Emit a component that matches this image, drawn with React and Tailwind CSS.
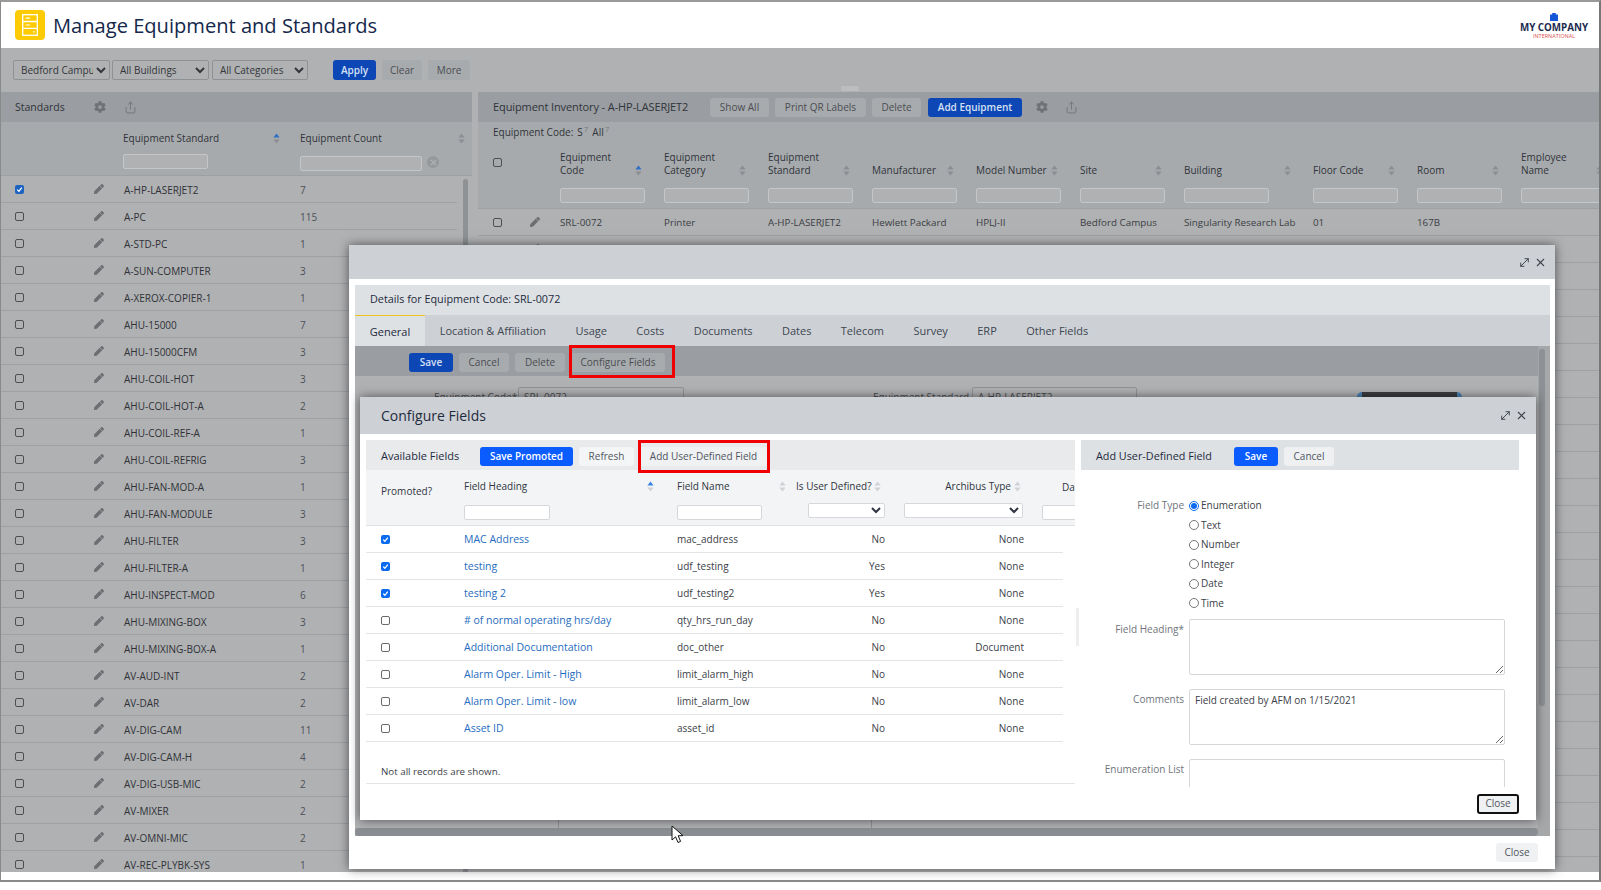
import React from 'react';
import { FaCog, FaPen } from 'react-icons/fa';
import { X, MoveDiagonal, Share } from 'lucide-react';

const standards = [['A-HP-LASERJET2','7'],['A-PC','115'],['A-STD-PC','1'],['A-SUN-COMPUTER','3'],['A-XEROX-COPIER-1','1'],['AHU-15000','7'],['AHU-15000CFM','3'],['AHU-COIL-HOT','3'],['AHU-COIL-HOT-A','2'],['AHU-COIL-REF-A','1'],['AHU-COIL-REFRIG','3'],['AHU-FAN-MOD-A','1'],['AHU-FAN-MODULE','3'],['AHU-FILTER','3'],['AHU-FILTER-A','1'],['AHU-INSPECT-MOD','6'],['AHU-MIXING-BOX','3'],['AHU-MIXING-BOX-A','1'],['AV-AUD-INT','2'],['AV-DAR','2'],['AV-DIG-CAM','11'],['AV-DIG-CAM-H','4'],['AV-DIG-USB-MIC','2'],['AV-MIXER','2'],['AV-OMNI-MIC','2'],['AV-REC-PLYBK-SYS','1']];

const invCols = [
  { l1: 'Equipment', l2: 'Code', w: 'w-[104px]', v: 'SRL-0072', active: true },
  { l1: 'Equipment', l2: 'Category', w: 'w-[104px]', v: 'Printer' },
  { l1: 'Equipment', l2: 'Standard', w: 'w-[104px]', v: 'A-HP-LASERJET2' },
  { l2: 'Manufacturer', w: 'w-[104px]', v: 'Hewlett Packard' },
  { l2: 'Model Number', w: 'w-[104px]', v: 'HPLJ-II' },
  { l2: 'Site', w: 'w-[104px]', v: 'Bedford Campus' },
  { l2: 'Building', w: 'w-[129px]', v: 'Singularity Research Lab' },
  { l2: 'Floor Code', w: 'w-[104px]', v: '01' },
  { l2: 'Room', w: 'w-[104px]', v: '167B' },
  { l1: 'Employee', l2: 'Name', w: 'w-[104px]', v: '' },
];

const fields = [
  ['MAC Address','mac_address','No','None',true],
  ['testing','udf_testing','Yes','None',true],
  ['testing 2','udf_testing2','Yes','None',true],
  ['# of normal operating hrs/day','qty_hrs_run_day','No','None',false],
  ['Additional Documentation','doc_other','No','Document',false],
  ['Alarm Oper. Limit - High','limit_alarm_high','No','None',false],
  ['Alarm Oper. Limit - low','limit_alarm_low','No','None',false],
  ['Asset ID','asset_id','No','None',false],
];

const tabs = ['General','Location & Affiliation','Usage','Costs','Documents','Dates','Telecom','Survey','ERP','Other Fields'];
const radios = ['Enumeration','Text','Number','Integer','Date','Time'];

function Sort({ active, light }) {
  const off = light ? '#cfd2d6' : '#8b8e92';
  return (
    <svg width="7" height="11" viewBox="0 0 7 11" className="shrink-0">
      <path d="M3.5 0.5 L6.6 4.6 H0.4 Z" fill={active ? (light ? '#3b82e6' : '#2f6fc4') : off} />
      <path d="M3.5 10.5 L6.6 6.4 H0.4 Z" fill={off} />
    </svg>
  );
}

function Check({ on, bright }) {
  if (on) {
    return (
      <span className={`flex h-[9px] w-[9px] shrink-0 items-center justify-center rounded-[2px] ${bright ? 'bg-[#0b6bf0]' : 'bg-[#1d63c0]'}`}>
        <svg width="7" height="7" viewBox="0 0 7 7"><path d="M1.2 3.6 L2.9 5.3 L5.8 1.6" stroke="#fff" strokeWidth="1.3" fill="none" /></svg>
      </span>
    );
  }
  return <span className={`block h-[9px] w-[9px] shrink-0 rounded-[2px] border ${bright ? 'border-[#6b6b6b] bg-white' : 'border-[#4d4f52]'}`} />;
}

function DimBtn({ children, className = '' }) {
  return <span className={`flex h-[19px] items-center justify-center rounded-[3px] bg-[#a8abae] text-[10px] text-[#4a4d52] ${className}`}>{children}</span>;
}
function DimPrimary({ children, className = '' }) {
  return <span className={`flex h-[19px] items-center justify-center rounded-[3px] bg-[#0d47b5] text-[10px] font-semibold text-[#d6e0f5] ${className}`}>{children}</span>;
}
function Btn({ children, className = '' }) {
  return <span className={`flex h-[19px] items-center justify-center rounded-[3px] bg-[#eef0f2] text-[10px] text-[#4f5560] ${className}`}>{children}</span>;
}
function Primary({ children, className = '' }) {
  return <span className={`flex h-[19px] items-center justify-center rounded-[3px] bg-[#0b5cff] text-[10px] font-semibold text-white ${className}`}>{children}</span>;
}
const dimInput = 'block h-[15px] rounded-[2px] border border-[#c4c6c8] bg-[#b0b1b3] outline-none';
const dimSelect = 'h-[20px] rounded-[2px] border border-[#8f9194] bg-[#b0b1b3] pl-[3px] text-[10px] text-[#33363a] outline-none';

function Pencil() {
  return <FaPen className="h-[10px] w-[10px] shrink-0 text-[#6c6e71]" />;
}

function StandardsPanel() {
  return (
    <section className="flex h-full w-[471px] shrink-0 flex-col overflow-hidden">
      <div className="flex h-[30px] shrink-0 items-center bg-[#9a9da1] pl-[14px]">
        <span className="w-[79px] pt-[2px] text-[10.5px] text-[#30343a]">Standards</span>
        <FaCog className="h-[12px] w-[12px] text-[#6f7276]" />
        <Share className="ml-[18px] h-[13px] w-[13px] text-[#6f7276]" strokeWidth={1.6} />
      </div>
      <div className="h-[54px] shrink-0 border-b border-[#9ea1a4] bg-[#a7aaad]">
        <div className="flex h-[32px] items-center text-[10px] text-[#30343a]">
          <span className="ml-[122px] flex w-[157px] items-center justify-between"><span>Equipment Standard</span><Sort active /></span>
          <span className="ml-[20px] flex w-[165px] items-center justify-between"><span>Equipment Count</span><Sort /></span>
        </div>
        <div className="flex items-start">
          <input className={`${dimInput} ml-[122px] w-[85px]`} aria-label="Equipment Standard" />
          <input className={`${dimInput} ml-[92px] mt-[2px] w-[122px]`} aria-label="Equipment Count" />
          <span className="ml-[5px] mt-[2px] flex h-[12px] w-[12px] items-center justify-center rounded-full bg-[#96999c]"><X className="h-[9px] w-[9px] text-[#b0b1b3]" strokeWidth={3} /></span>
        </div>
      </div>
      <div className="flex min-h-0 flex-1 bg-[#b0b1b3]">
        <div className="w-[456px] shrink-0">
          {standards.map(([n, c], i) => (
            <div key={n} className="flex h-[27px] items-center border-b border-[#9ea1a4] pl-[14px] text-[10px]">
              <Check on={i === 0} />
              <span className="ml-[70px]"><Pencil /></span>
              <span className="ml-[20px] w-[176px] pt-[3px] text-[#2f3237]">{n}</span>
              <span className="pt-[3px] text-[#4b5058]">{c}</span>
            </div>
          ))}
        </div>
        <div className="ml-[6px] mt-[3px] w-[5px] self-stretch rounded-t-full bg-[#8f9295]" />
      </div>
    </section>
  );
}

function InventoryPanel() {
  return (
    <section className="ml-[6px] flex h-full min-w-0 flex-1 flex-col overflow-hidden">
      <div className="flex h-[30px] shrink-0 items-center bg-[#9a9da1] pl-[15px]">
        <span className="w-[217px] whitespace-nowrap text-[11px] tracking-[-0.1px] text-[#30343a]">Equipment Inventory - A-HP-LASERJET2</span>
        <DimBtn className="w-[59px]">Show All</DimBtn>
        <DimBtn className="ml-[6px] w-[91px]">Print QR Labels</DimBtn>
        <DimBtn className="ml-[6px] w-[49px]">Delete</DimBtn>
        <DimPrimary className="ml-[7px] w-[94px]">Add Equipment</DimPrimary>
        <FaCog className="ml-[14px] h-[12px] w-[12px] text-[#6f7276]" />
        <Share className="ml-[17px] h-[13px] w-[13px] text-[#6f7276]" strokeWidth={1.6} />
      </div>
      <div className="h-[87px] shrink-0 border-b border-[#9ea1a4] bg-[#a7aaad]">
        <div className="flex h-[21px] items-center pl-[15px] text-[10px] text-[#30343a]">
          <span>Equipment Code:</span>
          <span className="ml-[4px]">S</span><sup className="ml-[1px] text-[8px] text-[#777a7e]">7</sup>
          <span className="ml-[4px]">All</span><sup className="ml-[1px] text-[8px] text-[#777a7e]">7</sup>
        </div>
        <div className="flex h-[34px] w-[1300px] items-end">
          <span className="flex w-[82px] shrink-0 self-start pl-[15px] pt-[15px]"><Check /></span>
          {invCols.map((c, i) => (
            <div key={i} className={`${c.w} shrink-0 pr-[22px] text-[10px] leading-[13px] text-[#30343a]`}>
              {c.l1 && <div>{c.l1}</div>}
              <div className="flex items-center justify-between"><span>{c.l2}</span><Sort active={c.active} /></div>
            </div>
          ))}
        </div>
        <div className="mt-[11px] flex w-[1300px]">
          <span className="w-[82px] shrink-0" />
          {invCols.map((c, i) => (
            <div key={i} className={`${c.w} shrink-0`}>
              <input className={`${dimInput} w-[85px]`} aria-label={c.l2} />
            </div>
          ))}
        </div>
      </div>
      <div className="min-h-0 flex-1 bg-[#b0b1b3]">
        {Array.from({ length: 25 }).map((_, r) => (
          <div key={r} className="flex h-[27px] w-[1300px] items-center border-b border-[#9ea1a4] text-[9.8px] text-[#3b3e43]">
            {r < 2 && <span className="flex w-[52px] shrink-0 items-center pl-[15px]"><Check /></span>}
            {r < 2 && <span className="w-[30px] shrink-0"><Pencil /></span>}
            {r === 0 && invCols.map((c, i) => <span key={i} className={`${c.w} shrink-0 pt-[3px]`}>{c.v}</span>)}
          </div>
        ))}
      </div>
    </section>
  );
}

function FirstModal() {
  return (
    <div className="absolute left-[349px] top-[245px] flex h-[624px] w-[1206px] flex-col bg-white shadow-[0_0_10px_rgba(0,0,0,0.55)]">
      <div className="flex h-[34px] shrink-0 items-center justify-end gap-[3px] bg-[#cdd1d5] pr-[8px] text-[#41464d]">
        <MoveDiagonal className="h-[13px] w-[13px]" strokeWidth={1.8} />
        <X className="h-[13px] w-[13px]" strokeWidth={2} />
      </div>
      <div className="ml-[6px] mr-[5px] mt-[6px] flex h-[30px] shrink-0 items-center bg-[#dde1e4] pb-[2px] pl-[15px] text-[10.8px] text-[#1f2a3d]">Details for Equipment Code: SRL-0072</div>
      <div className="ml-[6px] mr-[5px] flex h-[31px] shrink-0 items-stretch bg-[#cdd1d5] text-[11px] text-[#3e4651]">
        {tabs.map((t, i) => (
          <span key={t} className={`flex items-center pt-[2px] ${i === 0 ? 'w-[70px] justify-center border-t border-[#f0c419] bg-[#dde1e4] text-[#1f2a3d]' : 'px-[14.7px]'}`}>{t}</span>
        ))}
      </div>
      <div className="ml-[6px] mr-[5px] flex min-h-0 flex-1 bg-[#a5a7a9]">
        <div className="flex min-w-0 flex-1 flex-col">
          <div className="flex h-[30px] shrink-0 items-center bg-[#9a9da1] pl-[54px] pt-[2px]">
            <DimPrimary className="w-[44px]">Save</DimPrimary>
            <DimBtn className="ml-[6px] w-[50px]">Cancel</DimBtn>
            <DimBtn className="ml-[6px] w-[50px]">Delete</DimBtn>
            <DimBtn className="ml-[6px] w-[94px]">Configure Fields</DimBtn>
          </div>
          <div className="flex min-h-0 flex-1 flex-col justify-between overflow-hidden bg-[#b0b1b3]">
            <div className="flex items-start pt-[11px] text-[10px] text-[#4a4d52]">
              <span className="ml-[79px] w-[78px] whitespace-nowrap pt-[3px]">Equipment Code*</span>
              <span className="ml-[6px] h-[20px] w-[166px] rounded-[2px] border border-[#909295] pl-[5px] pt-[2px]">SRL-0072</span>
              <span className="ml-[189px] w-[93px] whitespace-nowrap pt-[3px]">Equipment Standard</span>
              <span className="ml-[6px] h-[20px] w-[165px] rounded-[2px] border border-[#909295] pl-[5px] pt-[2px]">A-HP-LASERJET2</span>
              <span className="ml-[220px] mt-[5px] h-[20px] w-[105px] rounded-t-[5px] bg-[#4d84b5] px-[5px]"><span className="block h-full bg-[#3c3d40]" /></span>
            </div>
            <div className="flex h-[8px] shrink-0">
              <span className="ml-[203px] w-[314px] border-x border-[#8f9194]" />
            </div>
          </div>
          <div className="h-[8px] shrink-0 rounded-full bg-[#8a8d91]" />
        </div>
        <div className="w-[12px] shrink-0 pl-[1px] pt-[3px]">
          <div className="h-[357px] w-[6px] rounded-full bg-[#8d9094]" />
        </div>
      </div>
      <div className="flex h-[33px] shrink-0 items-center justify-end pr-[17px]">
        <Btn className="w-[42px] bg-[#f0f1f2]">Close</Btn>
      </div>
    </div>
  );
}

const fieldGrid = 'grid grid-cols-[98px_213px_119px_108px_138px_1fr]';

function SecondModal() {
  return (
    <div className="absolute left-[360px] top-[397px] flex h-[423px] w-[1176px] flex-col bg-white shadow-[0_0_10px_rgba(0,0,0,0.55)]">
      <div className="flex h-[37px] shrink-0 items-center bg-[#cdd1d5] pl-[21px] pr-[8px] text-[#41464d]">
        <span className="flex-1 text-[14px] text-[#1f2a3d]">Configure Fields</span>
        <MoveDiagonal className="mr-[3px] h-[13px] w-[13px]" strokeWidth={1.8} />
        <X className="h-[13px] w-[13px]" strokeWidth={2} />
      </div>
      <div className="ml-[6px] mt-[6px] flex h-[347px] shrink-0">
        <div className="flex w-[709px] shrink-0 flex-col overflow-hidden">
          <div className="flex h-[30px] shrink-0 items-center bg-[#e8eaec] pl-[15px] pt-[2px]">
            <span className="w-[99px] text-[11px] text-[#1f2a3d]">Available Fields</span>
            <Primary className="w-[93px]">Save Promoted</Primary>
            <Btn className="ml-[6px] w-[55px] bg-[#f4f5f6]">Refresh</Btn>
            <Btn className="ml-[6px] w-[127px] bg-[#f0f1f3]">Add User-Defined Field</Btn>
          </div>
          <div className={`${fieldGrid} h-[56px] shrink-0 items-start border-b border-[#dfe1e4] bg-[#f3f4f6] text-[10px] text-[#2f3540]`}>
            <span className="pl-[15px] pt-[14px]">Promoted?</span>
            <div className="pt-[10px]">
              <div className="flex h-[13px] w-[190px] items-center justify-between"><span>Field Heading</span><Sort active light /></div>
              <input className="mt-[12px] block h-[15px] w-[86px] rounded-[2px] border border-[#d5d7da] bg-white outline-none" aria-label="Field Heading" />
            </div>
            <div className="pt-[10px]">
              <div className="flex h-[13px] w-[109px] items-center justify-between"><span>Field Name</span><Sort light /></div>
              <input className="mt-[12px] block h-[15px] w-[85px] rounded-[2px] border border-[#d5d7da] bg-white outline-none" aria-label="Field Name" />
            </div>
            <div className="pr-[19px] pt-[10px]">
              <div className="flex h-[13px] items-center gap-[3px] whitespace-nowrap"><span>Is User Defined?</span><Sort light /></div>
              <select className="ml-[12px] mt-[10px] block h-[15px] w-[77px] rounded-[2px] border border-[#d5d7da] bg-white outline-none" aria-label="Is User Defined?"><option></option></select>
            </div>
            <div className="pr-[21px] pt-[10px]">
              <div className="flex h-[13px] items-center justify-end gap-[3px] whitespace-nowrap"><span>Archibus Type</span><Sort light /></div>
              <select className="mt-[10px] block h-[15px] w-[119px] rounded-[2px] border border-[#d5d7da] bg-white outline-none" aria-label="Archibus Type"><option></option></select>
            </div>
            <div className="pt-[10px]">
              <div className="h-[13px] whitespace-nowrap pl-[20px]">Data Type</div>
              <input className="mt-[12px] block h-[15px] w-[60px] rounded-[2px] border border-[#d5d7da] bg-white outline-none" aria-label="Data Type" />
            </div>
          </div>
          <div className="w-[697px]">
            {fields.map(([a, b, c, d, on]) => (
              <div key={b} className={`${fieldGrid} h-[27px] items-center border-b border-[#e2e4e6] text-[10px] text-[#3b4048]`}>
                <span className="pl-[15px]"><Check on={on} bright /></span>
                <span className="whitespace-nowrap pt-[1px] text-[10.5px] text-[#1f6cc0]">{a}</span>
                <span>{b}</span>
                <span className="pr-[19px] text-right">{c}</span>
                <span className="pr-[18px] text-right">{d}</span>
                <span />
              </div>
            ))}
          </div>
          <div className="flex h-[42px] shrink-0 items-end border-b border-[#e2e4e6] pb-[3px] pl-[15px] text-[9.75px] text-[#3b4048]">Not all records are shown.</div>
        </div>
        <div className="flex w-[6px] shrink-0 items-center pb-[28px] pl-[1px]">
          <span className="mt-[55px] h-[38px] w-[3px] bg-[#eceef0]" />
        </div>
        <div className="flex w-[438px] shrink-0 flex-col overflow-hidden">
          <div className="flex h-[30px] shrink-0 items-center bg-[#dde1e4] pl-[15px] pt-[2px]">
            <span className="w-[138px] text-[10.8px] text-[#1f2a3d]">Add User-Defined Field</span>
            <Primary className="w-[44px]">Save</Primary>
            <Btn className="ml-[6px] w-[50px]">Cancel</Btn>
          </div>
          <div className="min-h-0 flex-1 pt-[26px] text-[10px]">
            <div className="flex">
              <span className="w-[103px] pt-[2px] text-right text-[#6f747b]">Field Type</span>
              <div className="ml-[5px]">
                {radios.map((r, i) => (
                  <label key={r} className="flex h-[19.5px] items-center text-[#3b4048]">
                    <input type="radio" name="ft" defaultChecked={i === 0} className="m-0 h-[10px] w-[10px] accent-[#0b6bf0]" />
                    <span className="ml-[2px]">{r}</span>
                  </label>
                ))}
              </div>
            </div>
            <div className="mt-[6px] flex">
              <span className="w-[103px] pt-[3px] text-right text-[#6f747b]">Field Heading*</span>
              <textarea aria-label="Field Heading" className="ml-[5px] block h-[56px] w-[316px] rounded-[2px] border border-[#d5d7da] bg-white px-[5px] py-[3px] outline-none" />
            </div>
            <div className="mt-[14px] flex">
              <span className="w-[103px] pt-[3px] text-right text-[#6f747b]">Comments</span>
              <textarea aria-label="Comments" defaultValue="Field created by AFM on 1/15/2021" className="ml-[5px] block h-[56px] w-[316px] rounded-[2px] border border-[#d5d7da] bg-white px-[5px] py-[3px] text-[#3b4048] outline-none" />
            </div>
            <div className="mt-[14px] flex">
              <span className="w-[103px] pt-[3px] text-right text-[#6f747b]">Enumeration List</span>
              <textarea aria-label="Enumeration List" className="ml-[5px] block h-[56px] w-[316px] rounded-[2px] border border-[#d5d7da] bg-white outline-none" />
            </div>
          </div>
        </div>
      </div>
      <div className="flex min-h-0 flex-1 items-center justify-end pr-[17px]">
        <span className="flex h-[20px] w-[42px] items-center justify-center rounded-[3px] border-2 border-[#111] bg-[#f0f1f2] text-[10px] text-[#4f5560]">Close</span>
      </div>
    </div>
  );
}

export default function App() {
  return (
    <div className="relative h-[890px] w-[1601px] overflow-hidden bg-white font-['Open_Sans',sans-serif]">
      <div className="flex h-[882px] flex-col border-b-2 border-l border-r-2 border-t-2 border-b-[#8a8a8a] border-l-[#8a8a8a] border-r-[#777] border-t-[#9a9a9a] pb-[8px]">
        <header className="flex h-[46px] shrink-0 items-center pl-[14px] pr-[10px]">
          <span className="flex h-[30px] w-[30px] items-center justify-center rounded-[4px] bg-[#fdcb04]">
            <svg width="16" height="22" viewBox="0 0 16 22" fill="none" stroke="#fff" strokeWidth="1.3">
              <rect x="0.7" y="0.7" width="14.6" height="20.6" />
              <path d="M0.7 7.5 H15.3 M0.7 14.3 H15.3" />
              <path d="M3.5 4.1 H8 M3.5 11 H8 M11 17.9 H12.5" strokeWidth="1.2" />
            </svg>
          </span>
          <h1 className="ml-[8px] flex-1 pt-[3px] text-[20.1px] font-normal text-[#14284b]">Manage Equipment and Standards</h1>
          <div className="flex w-[70px] flex-col items-center pt-[3px]">
            <svg width="8" height="8" viewBox="0 0 8 8" className="mb-[2px]"><path d="M0 1.5 H2.2 V0 H5.8 V1.5 H8 V8 H0 Z" fill="#1557d6" /></svg>
            <span className="whitespace-nowrap text-[9.8px] font-bold leading-[10px] text-[#1d2b4f]">MY COMPANY</span>
            <span className="whitespace-nowrap text-[5.5px] leading-[7px] text-[#d9534f]">INTERNATIONAL</span>
          </div>
        </header>
        <main className="flex min-h-0 flex-1 flex-col bg-[#b0b1b3]">
          <div className="relative flex h-[44px] shrink-0 items-start pl-[12px] pt-[12px]">
            <select className={`${dimSelect} w-[97px]`} aria-label="Site"><option>Bedford Campus</option></select>
            <select className={`${dimSelect} ml-[2px] w-[97px]`} aria-label="Building"><option>All Buildings</option></select>
            <select className={`${dimSelect} ml-[3px] w-[96px]`} aria-label="Category"><option>All Categories</option></select>
            <DimPrimary className="ml-[25px] h-[20px] w-[43px]">Apply</DimPrimary>
            <DimBtn className="ml-[6px] h-[20px] w-[40px]">Clear</DimBtn>
            <DimBtn className="ml-[6px] h-[20px] w-[42px]">More</DimBtn>
            <span className="absolute bottom-[1px] left-[840px] h-[5px] w-[18px] rounded-[1px] bg-[#bcbdbf]" />
          </div>
          <div className="flex min-h-0 flex-1">
            <StandardsPanel />
            <InventoryPanel />
          </div>
        </main>
      </div>
      <FirstModal />
      <SecondModal />
      <span className="pointer-events-none absolute left-[569px] top-[345px] h-[33px] w-[106px] border-[3px] border-[#f00000]" />
      <span className="pointer-events-none absolute left-[638px] top-[440px] h-[33px] w-[132px] border-[3px] border-[#f00000]" />
      <svg className="pointer-events-none absolute left-[671px] top-[825px]" width="14" height="20" viewBox="0 0 14 20">
        <path d="M1 1 V15 L4.6 11.8 L7 17.5 L9.6 16.4 L7.2 10.8 L12 10.6 Z" fill="#fff" stroke="#111" strokeWidth="1" />
      </svg>
    </div>
  );
}
